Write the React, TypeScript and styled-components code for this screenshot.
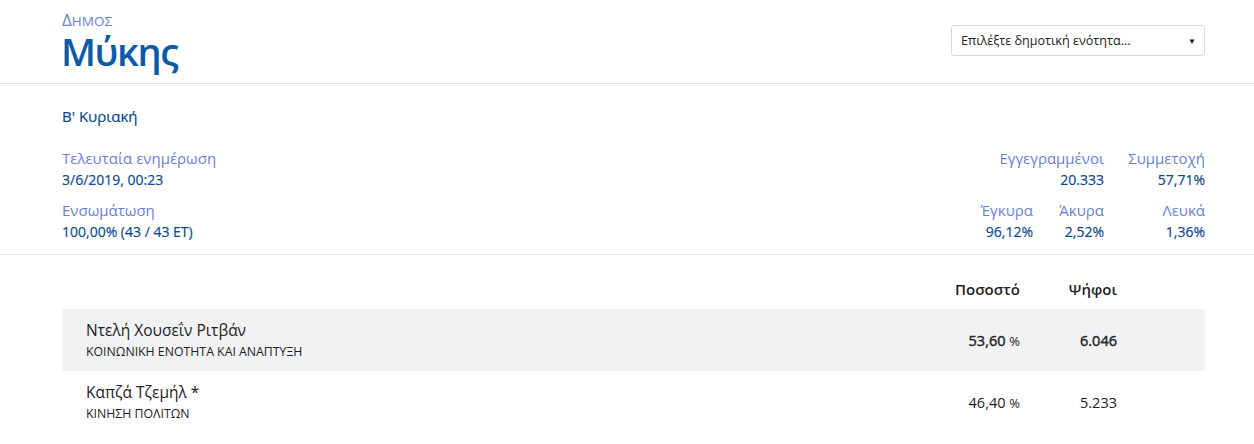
import React from "react";
import styled, { createGlobalStyle } from "styled-components";

const Global = createGlobalStyle`
  html, body { margin: 0; padding: 0; background: #fff; }
  body { font-family: "Open Sans", "Noto Sans", sans-serif; color: #222; }
`;

const Header = styled.header`
  display: flex;
  justify-content: space-between;
  align-items: flex-start;
  padding: 11px 49px 0 62px;
  height: 72px;
  border-bottom: 1px solid #e2e2e2;
`;

const TitleBlock = styled.div`
  display: flex;
  flex-direction: column;
`;

const Kicker = styled.div`
  font-size: 13.5px;
  line-height: 17px;
  height: 18px;
  color: #6b7fd6;
`;

const KickerInitial = styled.span`
  display: inline-block;
  font-size: 17px;
  line-height: 17px;
`;

const Title = styled.h1`
  margin: 2px 0 0 -1px;
  font-size: 38px;
  line-height: 40px;
  font-weight: 600;
  color: #0d5aa7;
  letter-spacing: -1.4px;
`;

const Select = styled.div`
  margin-top: 14px;
  width: 254px;
  height: 31px;
  box-sizing: border-box;
  border: 1px solid #d6dae2;
  border-radius: 3px;
  display: flex;
  align-items: center;
  justify-content: space-between;
  padding: 0 8px 0 9px;
  font-size: 12.6px;
  color: #222;
`;

const Caret = styled.span`
  font-size: 8px;
  color: #111;
`;

const Summary = styled.section`
  padding: 22px 49px 0 62px;
  height: 148px;
  border-bottom: 1px solid #e2e2e2;
`;

const Round = styled.div`
  font-size: 15px;
  line-height: 20px;
  color: #0c4a8c;
  -webkit-text-stroke: 0.2px #0c4a8c;
`;

const StatsRow = styled.div`
  display: flex;
  justify-content: space-between;
  margin-top: 22px;
`;

const LeftStats = styled.div`
  display: flex;
  flex-direction: column;
  gap: 10px;
`;

const Stat = styled.div<{ $align?: string; $span?: number }>`
  display: flex;
  flex-direction: column;
  text-align: ${(p) => p.$align || "left"};
  grid-column: ${(p) => (p.$span ? `span ${p.$span}` : "auto")};
`;

const Label = styled.span`
  font-size: 15px;
  line-height: 21px;
  color: #6b7fd6;
`;

const Value = styled.span`
  font-size: 14px;
  line-height: 21px;
  color: #0c4a8c;
  -webkit-text-stroke: 0.2px #0c4a8c;
`;

const RightStats = styled.div`
  display: grid;
  grid-template-columns: 71px 71px 101px;
  row-gap: 10px;
`;

const Table = styled.div`
  padding: 20px 49px 0 62px;
`;

const Row = styled.div<{ $shaded?: boolean; $head?: boolean }>`
  display: grid;
  grid-template-columns: 1fr 120px 97px 88px;
  align-items: center;
  height: ${(p) => (p.$head ? "34px" : "62px")};
  background: ${(p) => (p.$shaded ? "#f1f2f4" : "transparent")};
  padding-left: 24px;
`;

const HeadCell = styled.div`
  text-align: right;
  font-size: 15px;
  font-weight: 600;
  color: #222;
  padding-bottom: 6px;
`;

const Candidate = styled.div`
  display: flex;
  flex-direction: column;
`;

const Name = styled.span`
  font-size: 15.5px;
  line-height: 20px;
  color: #222;
`;

const Party = styled.span`
  font-size: 12.3px;
  line-height: 18px;
  margin-top: 3px;
  color: #222;
`;

const Num = styled.div<{ $bold?: boolean }>`
  text-align: right;
  font-size: 14.5px;
  color: #222;
  -webkit-text-stroke: ${(p) => (p.$bold ? "0.4px #222" : "0")};
`;

const Pct = styled.span`
  font-size: 13px;
  -webkit-text-stroke: 0;
`;

const candidates = [
  { name: "Ντελή Χουσεΐν Ριτβάν", party: "ΚΟΙΝΩΝΙΚΗ ΕΝΟΤΗΤΑ ΚΑΙ ΑΝΑΠΤΥΞΗ", pct: "53,60", votes: "6.046", win: true },
  { name: "Καπζά Τζεμήλ *", party: "ΚΙΝΗΣΗ ΠΟΛΙΤΩΝ", pct: "46,40", votes: "5.233", win: false },
];

export default function App() {
  return (
    <>
      <Global />
      <Header>
        <TitleBlock>
          <Kicker>
            <KickerInitial>Δ</KickerInitial>ΗΜΟΣ
          </Kicker>
          <Title>Μύκης</Title>
        </TitleBlock>
        <Select>
          <span>Επιλέξτε δημοτική ενότητα...</span>
          <Caret>▼</Caret>
        </Select>
      </Header>
      <Summary>
        <Round>Β' Κυριακή</Round>
        <StatsRow>
          <LeftStats>
            <Stat>
              <Label>Τελευταία ενημέρωση</Label>
              <Value>3/6/2019, 00:23</Value>
            </Stat>
            <Stat>
              <Label>Ενσωμάτωση</Label>
              <Value>100,00% (43 / 43 ΕΤ)</Value>
            </Stat>
          </LeftStats>
          <RightStats>
            <Stat $align="right" $span={2}>
              <Label>Εγγεγραμμένοι</Label>
              <Value>20.333</Value>
            </Stat>
            <Stat $align="right">
              <Label>Συμμετοχή</Label>
              <Value>57,71%</Value>
            </Stat>
            <Stat $align="right">
              <Label>Έγκυρα</Label>
              <Value>96,12%</Value>
            </Stat>
            <Stat $align="right">
              <Label>Άκυρα</Label>
              <Value>2,52%</Value>
            </Stat>
            <Stat $align="right">
              <Label>Λευκά</Label>
              <Value>1,36%</Value>
            </Stat>
          </RightStats>
        </StatsRow>
      </Summary>
      <Table>
        <Row $head>
          <div />
          <HeadCell>Ποσοστό</HeadCell>
          <HeadCell>Ψήφοι</HeadCell>
          <div />
        </Row>
        {candidates.map((c, i) => (
          <Row key={c.name} $shaded={i === 0}>
            <Candidate>
              <Name>{c.name}</Name>
              <Party>{c.party}</Party>
            </Candidate>
            <Num $bold={c.win}>
              {c.pct} <Pct>%</Pct>
            </Num>
            <Num $bold={c.win}>{c.votes}</Num>
            <div />
          </Row>
        ))}
      </Table>
    </>
  );
}
